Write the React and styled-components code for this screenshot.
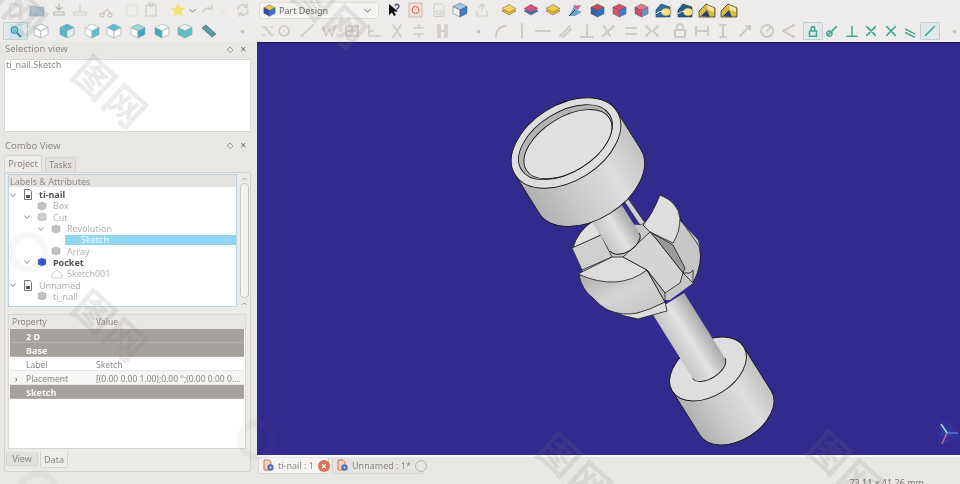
import React from "react";
import styled, { createGlobalStyle } from "styled-components";

const Global = createGlobalStyle`
  html, body { margin: 0; padding: 0; background: #e9e7e4; overflow: hidden; }
  * { box-sizing: border-box; }
`;

const Page = styled.div`
  position: relative;
  width: 960px;
  height: 484px;
  overflow: hidden;
  display: flex;
  flex-direction: column;
  background: #e9e7e4;
  color: #8a8884;
  font-family: "Noto Sans", sans-serif;
  font-size: 9px;
  filter: blur(0.35px);
`;
const Toolbars = styled.header`
  height: 42px;
  flex: none;
  display: flex;
  flex-direction: column;
  background: #eeecea;
`;
const ToolRow = styled.div`
  height: ${(p) => p.$h}px;
  display: flex;
  align-items: center;
`;
const Slot = styled.div`
  width: ${(p) => p.$w}px;
  flex: none;
  height: 18px;
  display: flex;
  align-items: center;
  justify-content: center;
  border-radius: 2px;
  background: ${(p) => (p.$on ? "#dfe9ea" : "transparent")};
  box-shadow: ${(p) => (p.$on ? "inset 0 0 0 1px #c6cfcf" : "none")};
  & > svg { flex: none; }
`;
const Combo = styled.div`
  width: 118px;
  height: 15px;
  flex: none;
  margin: 0 6px 0 0;
  display: flex;
  align-items: center;
  gap: 3px;
  padding: 0 6px 0 3px;
  background: #f4f3f1;
  border-radius: 2px;
  box-shadow: 0 0 0 1px #dfddd9;
  color: #6a6864;
  font-size: 9px;
`;
const ComboLabel = styled.span`
  flex: 1;
`;
const Main = styled.main`
  flex: 1;
  min-height: 0;
  display: flex;
`;
const Dock = styled.aside`
  width: 257px;
  flex: none;
  display: flex;
  flex-direction: column;
  padding: 0 6px 3px 4px;
`;
const DockTitle = styled.div`
  height: ${(p) => p.$h}px;
  flex: none;
  display: flex;
  align-items: center;
  justify-content: space-between;
  padding: ${(p) => p.$pt || 0}px 4px ${(p) => p.$pb || 0}px 1px;
  color: #8f8d89;
  font-size: 9.500px;
`;
const TitleBtns = styled.div`
  display: flex;
  gap: 7px;
  align-items: center;
  color: #77756f;
  font-size: 8px;
  line-height: 1;
`;
const SelectionBox = styled.div`
  height: 73px;
  flex: none;
  padding: 0 1px;
  background: #ffffff;
  border: 1px solid #dbd9d5;
  color: #8a8884;
  line-height: 10px;
  font-size: 9px;
`;
const TabsRow = styled.div`
  height: 17px;
  flex: none;
  display: flex;
  align-items: flex-end;
  gap: 3px;
`;
const TabBtn = styled.div`
  width: ${(p) => p.$w}px;
  height: ${(p) => (p.$on ? 17 : 15)}px;
  display: flex;
  align-items: center;
  justify-content: center;
  padding-bottom: 2px;
  background: ${(p) => (p.$on ? "#eeedea" : "#e3e1dd")};
  border: 1px solid #d6d4d0;
  border-bottom: none;
  border-radius: 2px 2px 0 0;
  color: #8a8884;
  font-size: 9px;
`;
const ComboPanel = styled.section`
  flex: 1;
  min-height: 0;
  display: flex;
  flex-direction: column;
  border: 1px solid #d6d4d0;
  border-radius: 2px;
  padding: 1px 3px 3px 3px;
  background: #eceae7;
`;
const TreeWrap = styled.div`
  height: 133px;
  flex: none;
  display: flex;
  gap: 2px;
`;
const Tree = styled.div`
  width: 229px;
  flex: none;
  background: #fff;
  border: 1px solid #b9d6e2;
`;
const TreeHead = styled.div`
  height: 12px;
  display: flex;
  align-items: center;
  padding-left: 1px;
  background: #e5e3e0;
  color: #8f8d89;
  font-size: 9px;
`;
const TreeBody = styled.div`
  padding-top: 2px;
`;
const TreeRow = styled.div`
  height: 11.300px;
  display: flex;
  align-items: center;
  padding-left: ${(p) => p.$depth * 14}px;
  color: ${(p) => (p.$bold ? "#55534f" : "#b4b2ae")};
  font-weight: ${(p) => (p.$bold ? 700 : 400)};
  font-size: 9px;
  white-space: nowrap;
`;
const Chev = styled.span`
  width: 14px;
  flex: none;
  display: flex;
`;
const TreeIcon = styled.span`
  width: 16px;
  flex: none;
  display: flex;
`;
const Selected = styled.span`
  flex: 1;
  margin-left: -16px;
  padding-left: 16px;
  height: 10px;
  display: flex;
  align-items: center;
  background: #90d5f3;
  color: #f4fbff;
`;
const Scroll = styled.div`
  width: 10px;
  flex: none;
  display: flex;
  flex-direction: column;
  align-items: center;
  color: #77756f;
  font-size: 7px;
  line-height: 8px;
`;
const ScrollThumb = styled.div`
  width: 9px;
  flex: 1;
  margin: 1px 0;
  background: #f2f1ef;
  border: 1px solid #c9c7c3;
  border-radius: 4px;
`;
const Props = styled.div`
  margin-top: 7px;
  width: 238px;
  flex: 1;
  min-height: 0;
  display: flex;
  flex-direction: column;
  padding: 0 1px;
  border: 1px solid #dad8d4;
  background: #fff;
`;
const PropHead = styled.div`
  height: 14px;
  flex: none;
  margin: 0 -1px;
  display: grid;
  grid-template-columns: 84px 1fr;
  align-items: center;
  padding: 0 0 2px 3px;
  background: #e9e7e4;
  color: #8a8884;
  font-size: 8.500px;
`;
const Group = styled.div`
  height: 14px;
  flex: none;
  padding-left: 16px;
  display: flex;
  align-items: center;
  background: #a5a29d;
  box-shadow: inset 0 -1px 0 #b5b2ad;
  color: #fbfaf8;
  font-weight: 700;
  font-size: 9px;
`;
const PropRow = styled.div`
  height: 14px;
  flex: none;
  padding-top: 2px;
  display: grid;
  grid-template-columns: 16px 70px 1fr;
  align-items: center;
  border-bottom: 1px solid #e8e6e3;
  background: ${(p) => (p.$alt ? "#f6f5f3" : "#fff")};
  color: #8a8884;
  font-size: 8.500px;
  white-space: nowrap;
`;
const Cell = styled.span`
  overflow: hidden;
  text-overflow: ellipsis;
  white-space: nowrap;
  padding-right: 3px;
`;
const Expander = styled.span`
  padding-left: 5px;
  color: #55534f;
  font-size: 8px;
`;
const BottomTabs = styled.div`
  height: 19px;
  flex: none;
  display: flex;
  align-items: flex-start;
  gap: 2px;
  margin-left: -2px;
  padding-top: 3px;
`;
const BottomTab = styled.div`
  width: ${(p) => p.$w}px;
  height: ${(p) => (p.$on ? 16 : 14)}px;
  display: flex;
  align-items: center;
  justify-content: center;
  background: ${(p) => (p.$on ? "#eeedea" : "#e3e1dd")};
  border: 1px solid #d6d4d0;
  border-top: none;
  border-radius: 0 0 2px 2px;
  font-size: 9px;
`;
const Center = styled.div`
  flex: 1;
  min-width: 0;
  display: flex;
  flex-direction: column;
`;
const Viewport = styled.div`
  height: 413px;
  flex: none;
  background: #332a8e;
  border-top: 1px solid #1d1a55;
`;
const Canvas = styled.svg`
  display: block;
  width: 703px;
  height: 412px;
`;
const DocTabs = styled.nav`
  height: 20px;
  flex: none;
  display: flex;
  align-items: center;
  gap: 3px;
  padding-left: 1px;
  border-top: 2px solid #f6f5f8;
`;
const DocTab = styled.div`
  width: ${(p) => p.$w}px;
  height: 16px;
  display: flex;
  align-items: center;
  gap: 4px;
  padding: 0 ${(p) => (p.$on ? 1 : 2)}px 0 4px;
  background: ${(p) => (p.$on ? "#f5f4f2" : "#e6e4e1")};
  border: 1px solid #d8d6d2;
  border-top: none;
  border-radius: 0 0 3px 3px;
  color: #8a8884;
  font-size: 9px;
`;
const DocName = styled.span`
  flex: 1;
  white-space: nowrap;
`;
const CloseDot = styled.span`
  width: 12px;
  height: 12px;
  flex: none;
  margin-right: ${(p) => (p.$on ? 0 : 5)}px;
  border-radius: 50%;
  display: flex;
  align-items: center;
  justify-content: center;
  font-size: 10px;
  font-weight: 700;
  line-height: 1;
  color: #fff;
  background: ${(p) => (p.$on ? "#d9735a" : "#e6e4e1")};
  border: ${(p) => (p.$on ? "none" : "1.500px solid #b5b3af")};
`;
const Status = styled.footer`
  height: 9px;
  flex: none;
  display: flex;
  justify-content: flex-end;
  padding-right: 36px;
  color: #77756f;
  font-size: 9px;
  line-height: 15px;
  overflow: hidden;
`;
const Stamp = styled.div`
  position: absolute;
  left: ${(p) => p.$x}px;
  top: ${(p) => p.$y}px;
  transform: rotate(42deg);
  color: rgba(120, 120, 120, 0.15);
  font-family: "Noto Sans CJK SC", sans-serif;
  font-size: 40px;
  font-weight: 700;
  line-height: 1;
  letter-spacing: 2px;
  white-space: nowrap;
  pointer-events: none;
`;
const Ring = styled.div`
  position: absolute;
  left: ${(p) => p.$x}px;
  top: ${(p) => p.$y}px;
  width: 40px;
  height: 40px;
  border-radius: 50%;
  border: 7px solid rgba(120, 120, 120, 0.06);
  pointer-events: none;
`;

/* ---------- drawn icons ---------- */
const Cube = ({ t = "#e84", l = "#c33", r = "#36b", s = 15 }) => (
  <svg width={s} height={s} viewBox="0 0 16 16">
    <path d="M8 1 15 4.500 8 8 1 4.500Z" fill={t} stroke="#444" strokeWidth=".4" />
    <path d="M1 4.500 8 8V15L1 11.500Z" fill={l} stroke="#444" strokeWidth=".4" />
    <path d="M15 4.500 8 8V15L15 11.500Z" fill={r} stroke="#444" strokeWidth=".4" />
  </svg>
);
const WireCube = ({ t = "#fff", l = "#fff", r = "#fff" }) => (
  <svg width="16" height="16" viewBox="0 0 16 16">
    <path d="M8 1 15 4.500 8 8 1 4.500Z" fill={t} stroke="#9aa" strokeWidth=".7" />
    <path d="M1 4.500 8 8V15L1 11.500Z" fill={l} stroke="#9aa" strokeWidth=".7" />
    <path d="M15 4.500 8 8V15L15 11.500Z" fill={r} stroke="#9aa" strokeWidth=".7" />
  </svg>
);
const Stroke = ({ d, c = "#cfcdc9", w = 1.600, s = 16 }) => (
  <svg width={s} height={s} viewBox="0 0 16 16">
    <path d={d} fill="none" stroke={c} strokeWidth={w} strokeLinecap="round" strokeLinejoin="round" />
  </svg>
);
const Layers = ({ c, e = "#6a5" }) => (
  <svg width="16" height="16" viewBox="0 0 16 16">
    <path d="M1 9 8 5l7 4-7 4Z" fill={e} stroke="#654" strokeWidth=".5" />
    <path d="M1 6.500 8 2.500l7 4-7 4Z" fill={c} stroke="#654" strokeWidth=".5" />
  </svg>
);
const Scene = ({ c }) => (
  <svg width="18" height="17" viewBox="0 0 18 17">
    <path d="M2 15V8l5-6 9 3v10Z" fill={c} stroke="#234" strokeWidth=".6" />
    <ellipse cx="12" cy="10" rx="5" ry="4" fill="#f4e27a" stroke="#555" strokeWidth=".5" />
    <path d="M2 12c3-3 6-3 9-2" stroke="#fff" fill="none" />
  </svg>
);
const Scene2 = () => (
  <svg width="18" height="17" viewBox="0 0 18 17">
    <path d="M1 15V9l7-7 9 4v9Z" fill="#d9b93c" stroke="#222" strokeWidth=".7" />
    <path d="M3 14 9 8l3 7Z" fill="#24466f" />
    <path d="M9 3l7 3v4l-6-2Z" fill="#f0e7b0" />
  </svg>
);
const Doc = ({ c = "#ddd" }) => <Stroke c={c} w={1.100} d="M3 14V2h7l3 3v9Z M10 2v3h3" />;
function Bullet() {
  return <svg width="5" height="5" viewBox="0 0 5 5"><circle cx="2.500" cy="2.500" r="1.800" fill="#c5c3bf" /></svg>;
}

const grey = "#d2d0cc";
const Row1 = [
  [22, <Doc c="#d5d3cf" />],
  [22, <svg width="16" height="14" viewBox="0 0 16 14"><path d="M1 3h5l1 1h8v9H1Z" fill="#aebfce" stroke="#9aa9b8" strokeWidth=".5" /></svg>],
  [21, <Stroke c="#b9b7b3" w={1.200} d="M3 13h10V10H3Z M8 2v6M5 5l3 3 3-3" />],
  [22, <Stroke c={grey} w={1.200} d="M2 13h12V10H2Z M8 3v6" />],
  [32, <Stroke c="#c4c2be" w={1.100} d="M3 11a2 2 0 1 0 .1 0M11 11a2 2 0 1 0 .1 0M5 11l3-4 3 4" />],
  [18, <Stroke c="#e2e0dc" w={1.100} d="M3 3h10v11H3Z" />],
  [20, <Stroke c="#cdcbc7" w={1.100} d="M3 3h10v11H3ZM6 1h4v3H6Z" />],
  [8, null],
  [18, <svg width="14" height="14" viewBox="0 0 14 14"><path d="M7 0l2 4.500 5 .5-3.500 3.500 1 5L7 11l-4.500 2.500 1-5L0 5l5-.5Z" fill="#f3e36a" /></svg>],
  [10, <Stroke c="#444" w={1.100} s={9} d="M3 6l5 5 5-5" />],
  [22, <Stroke c={grey} w={1.500} d="M3 10c2-4 5-5 9-3M12 3v4H8" />],
  [8, <Stroke c={grey} w={1.200} s={9} d="M3 6l5 5 5-5" />],
  [32, <Stroke c={grey} w={1.700} d="M3 8a5 5 0 0 1 9-3M13 8a5 5 0 0 1-9 3M12 2v3H9M4 14v-3h3" />],
  [1, null],
];
const Row1b = [
  [19, <svg width="14" height="14" viewBox="0 0 14 14"><path d="M2 1v11l3-2.500L7 13l2-1-2-3.500h4Z" fill="#111" /><path d="M8 3a2 2 0 1 1 3 2l-1 1v1" fill="none" stroke="#447" strokeWidth="1.300" /></svg>],
  [25, <svg width="15" height="16" viewBox="0 0 15 16"><rect x="1" y="1" width="13" height="14" fill="#f3ddd5" stroke="#c7b7af" /><circle cx="7.500" cy="8" r="3.500" fill="none" stroke="#c66" /></svg>],
  [21, <Stroke c="#cfcdc9" w={1} d="M3 14V2h8l2 2v10ZM6 9h5v3H6Z" />],
  [22, <Cube t="#9ec7ea" l="#f2f0ec" r="#3f7fc4" s={16} />],
  [22, <Stroke c={grey} w={1.200} d="M3 9v5h10V9M8 2v7M5 5l3-3 3 3" />],
  [5, null],
];
const Row1c = [
  [22, <Layers c="#f1d75a" e="#e0b63a" />],
  [22, <Layers c="#d94f84" e="#2d77b8" />],
  [22, <Layers c="#f1c94a" e="#e8b83a" />],
  [22, <svg width="16" height="16" viewBox="0 0 16 16"><path d="M2 14 8 2l2 6 5 2-7 4Z" fill="#6fa4d6" /><path d="M6 4l8-1-3 5Z" fill="#d65a8e" /><path d="M2 14 8 8" stroke="#444" /></svg>],
  [22, <Cube t="#c84a5c" l="#3a5fa8" r="#2c76c4" s={15} />],
  [22, <Cube t="#d9506a" l="#d9506a" r="#3384cd" s={15} />],
  [22, <Cube t="#e27a8e" l="#cc4e6c" r="#7a8fc0" s={15} />],
  [22, <Scene c="#2f6fa8" />],
  [22, <Scene c="#235b8e" />],
  [22, <Scene2 />],
  [22, <Scene2 />],
];
const view = "#56c0cf";
const Row2 = [
  [25, <svg width="14" height="15" viewBox="0 0 14 15"><rect width="14" height="15" fill="#cfe3e8" /><circle cx="5.500" cy="6" r="3.500" fill="#7cc0d4" stroke="#3a8ca4" /><path d="M8 9l4 4" stroke="#3a8ca4" strokeWidth="2" /></svg>, true],
  [26, <WireCube />],
  [26, <WireCube t="#4fb7c6" l="#4fb7c6" r="#e2f2f4" />],
  [23, <WireCube r={view} />],
  [22, <WireCube t={view} />],
  [26, <WireCube r="#39a9bb" t="#9ad9e2" />],
  [22, <WireCube l="#39a9bb" />],
  [23, <WireCube t="#e8f5f6" l={view} r={view} />],
  [26, <svg width="16" height="16" viewBox="0 0 16 16"><path d="M1 5l4-3 10 9-4 3Z" fill="#5f97a5" stroke="#37626e" strokeWidth=".6" /></svg>],
  [40, <Bullet />],
];
const g2 = "#cdcbc7";
const sketchPaths = [
  ["M3 4h2M11 4h2M3 12h2M11 12h2M5 4l6 8", 11],
  ["M8 3a5 5 0 1 0 .1 0M8 8h.1", 22.500],
  ["M2 13l6-5 6-6M4 13h.1", 22.500],
  ["M2 3l3 10 3-7 3 7 3-10", 22.500],
  ["M2 3h12v10H2ZM2 8h12M8 3v10", 22.500],
  ["M3 2v11h11M3 8h4", 22.500],
  ["M4 2l8 12M12 2 4 14", 22.500],
  ["M3 5h10M3 11h10M8 2v3M8 11v3", 22.500],
  ["M4 2h2v12H4ZM11 2h2v12h-2ZM6 8h5", 22.500],
];
const sketchPaths2 = [
  "M4 14C4 7 8 3 14 3",
  "M8 1v14",
  "M1 8h14",
  "M3 13 13 3M6 14 14 6",
  "M2 14h12M8 2v12",
  "M2 13 13 3M3 3l6 10",
  "M3 5h10M3 11h10",
  "M2 3l5 5-5 5M14 3 9 8l5 5",
];
const sketchPaths3 = [
  "M3 7h10v7H3ZM5 7V4a3 3 0 0 1 6 0v3",
  "M2 4v8M14 4v8M2 8h12",
  "M8 2v12M5 2h6M5 14h6",
  "M3 13 13 3M9 3h4v4",
  "M8 2a6 6 0 1 0 .1 0M8 8l3-3",
  "M14 2 3 8l11 6",
];
const teal = [
  "M4 8h8v6H4ZM6 8V5a2 2 0 0 1 4 0v3",
  "M3 13 13 3M5 8a3 3 0 1 0 .1 0",
  "M2 14h12M8 3v11",
  "M3 3l10 10M13 3 3 13M5 5h1M11 5h1M5 11h1M11 11h1",
  "M3 3l10 10M13 3 3 13",
  "M3 6l10 5M3 10l10 5",
  "M3 13 13 3M3 13h.1M13 3h.1",
];

const Chevron = () => (
  <svg width="8" height="8" viewBox="0 0 8 8">
    <path d="M1.500 2.500 4 5.500 6.500 2.500" fill="none" stroke="#8a8884" strokeWidth="1" />
  </svg>
);
const MiniCube = ({ c = "#c3c1bd" }) => (
  <svg width="10" height="10" viewBox="0 0 10 10">
    <path d="M1 2.500 5 1l4 1.500v5L5 9 1 7.500Z" fill={c} stroke="#9f9d99" strokeWidth=".4" />
  </svg>
);
const MiniDoc = () => (
  <svg width="10" height="11" viewBox="0 0 10 11">
    <path d="M1.500.5h5l2 2v8h-7Z" fill="#fff" stroke="#55534f" strokeWidth=".8" />
    <rect x="3" y="6" width="4" height="3" fill="#55534f" />
  </svg>
);
const MiniSketch = () => (
  <svg width="12" height="10" viewBox="0 0 12 10">
    <path d="M1 9V5l5-4 5 4v4Z" fill="none" stroke="#c9c7c3" strokeWidth=".9" />
  </svg>
);

const tree = [
  { d: 0, label: "ti-nail", chev: true, icon: <MiniDoc />, bold: true },
  { d: 1, label: "Box", icon: <MiniCube /> },
  { d: 1, label: "Cut", chev: true, icon: <MiniCube c="#d0cecb" /> },
  { d: 2, label: "Revolution", chev: true, icon: <MiniCube /> },
  { d: 3, label: "Sketch", selected: true },
  { d: 2, label: "Array", icon: <MiniCube /> },
  { d: 1, label: "Pocket", chev: true, icon: <MiniCube c="#2f55d0" />, bold: true },
  { d: 2, label: "Sketch001", icon: <MiniSketch /> },
  { d: 0, label: "Unnamed", chev: true, icon: <MiniDoc /> },
  { d: 1, label: "ti_nall", icon: <MiniCube /> },
];

const Cylinder = ({ x, y, rx, ry, len, angle = -32, fill = "url(#cyl)", top = "#dedede", bare, children }) => (
  <g transform={`translate(${x} ${y}) rotate(${angle})`}>
    <path
      d={`M${-rx} 0V${len}A${rx} ${ry} 0 0 0 ${rx} ${len}V0Z`}
      fill={fill}
      stroke={bare ? "none" : "#1a1a2a"}
      strokeWidth=".9"
    />
    {bare ? (
      <path d={`M${-rx} ${len}A${rx} ${ry} 0 0 0 ${rx} ${len}`} fill="none" stroke="#1a1a1a" strokeWidth=".9" />
    ) : (
      <ellipse rx={rx} ry={ry} fill={top} stroke="#1a1a1a" strokeWidth=".9" />
    )}
    {children}
  </g>
);

const Model = () => (
  <Canvas viewBox="257 43 703 412">
    <defs>
      <linearGradient id="cyl" x1="0" x2="1" y1="0" y2="0">
        <stop offset="0" stopColor="#b0b0b0" />
        <stop offset=".35" stopColor="#cbcbcb" />
        <stop offset=".7" stopColor="#dedede" />
        <stop offset="1" stopColor="#c2c2c2" />
      </linearGradient>
      <linearGradient id="shaft" x1="0" x2="1" y1="0" y2="0">
        <stop offset="0" stopColor="#c6c6c6" />
        <stop offset=".5" stopColor="#e2e2e2" />
        <stop offset="1" stopColor="#a9a9a9" />
      </linearGradient>
      <linearGradient id="side" x1="0" x2="1" y1="0" y2="1">
        <stop offset="0" stopColor="#a9a9a9" />
        <stop offset=".5" stopColor="#d4d4d4" />
        <stop offset="1" stopColor="#c4c4c4" />
      </linearGradient>
      <radialGradient id="axisGlow">
        <stop offset="0" stopColor="#3450c0" stopOpacity=".7" />
        <stop offset="1" stopColor="#332a8e" stopOpacity="0" />
      </radialGradient>
    </defs>

    {/* lower cap */}
    <Cylinder x={708} y={369} rx={42} ry={27} len={52} />
    {/* lower shaft */}
    <Cylinder x={668} y={303} rx={19} ry={10} len={77} fill="url(#shaft)" bare />

    {/* solid core that closes the gaps between the blades */}
    <path d="M593 222 640 225 670 210 698 240Q704 262 693 283L670 300 600 300 582 270 572 248Z" fill="#c6c6c6" />

    <g stroke="#1a1a1a" strokeWidth=".8" strokeLinejoin="round">
      <path d="M680 218 Q686 228 699 246 Q704 262 693 283" fill="none" />
      <path d="M660 195Q678 202 680 218 680 232 673 243L650 232 643 225Q652 215 660 195Z" fill="#dedede" />
      {/* dark slot wall */}
      <path d="M650 232 673 245 685 268 683 273 657 240Z" fill="#9a9a9a" />
      <path d="M683 273 690 273 693 270 693 283Z" fill="#c9c9c9" />
      {/* left blade */}
      <path d="M573 248Q577 232 593 221L601 235Z" fill="#e0e0e0" />
      <path d="M572 248 601 235 612 257 582 270Z" fill="#cfcfcf" />
      {/* lower segment: thin ledge, side, top */}
      <path d="M608 310 637 313 665 302 667 311 638 319 625 316Z" fill="#dcdcdc" />
      <path d="M579 275Q582 290 593 298 600 306 608 310 622 316 637 313 650 310 665 302L647 270Z" fill="url(#side)" />
      <path d="M578 274 612 257 623 257 647 270Q618 292 578 274Z" fill="#dddddd" />
      {/* centre block */}
      <path d="M650 232 623 257 647 270 665 293 680 283 683 273 657 240Z" fill="#d4d4d4" />
      <path d="M665 293 665 302 647 270Z" fill="#bdbdbd" />
    </g>

    {/* upper shaft and the sliver behind it */}
    <path d="M622 198 627 197 645 223 640 225Z" fill="#cfcfcf" stroke="#1a1a1a" strokeWidth=".6" />
    <Cylinder x={593} y={191} rx={17} ry={10} len={60} fill="url(#shaft)" bare />

    {/* upper cap */}
    <Cylinder x={566} y={143} rx={60} ry={38} len={45}>
      <ellipse rx={52} ry={30} cy={-1} fill="#b4b4b4" stroke="#1a1a1a" strokeWidth=".9" />
      <ellipse rx={49} ry={27} cx={1} cy={2} fill="#e0e0e0" stroke="#1a1a1a" strokeWidth=".9" />
    </Cylinder>

    {/* axis cross */}
    <circle cx="947" cy="433" r="15" fill="url(#axisGlow)" />
    <path d="M947 433H958" stroke="#4f7ad8" strokeWidth="1.500" />
    <path d="M947 433 941 424" stroke="#9fd8d8" strokeWidth="1.500" />
    <path d="M947 433 942 444" stroke="#c36a9a" strokeWidth="1.500" />
  </Canvas>
);

const SmallDocIcon = () => (
  <svg width="11" height="13" viewBox="0 0 11 13" style={{ flex: "none" }}>
    <path d="M1 1h5l2 2v8H1Z" fill="#f1d3c6" stroke="#d9734f" strokeWidth="1" />
    <circle cx="7.500" cy="8.500" r="3.200" fill="#5271b0" />
    <circle cx="7.500" cy="8.500" r="1" fill="#dfe5f2" />
  </svg>
);

export default function App() {
  return (
    <Page>
      <Global />
      <Toolbars>
        <ToolRow $h={20}>
          <Slot $w={4} />
          {Row1.map(([w, ic], i) => (
            <Slot key={i} $w={w}>{ic}</Slot>
          ))}
          <Combo>
            <Cube t="#e8c83a" l="#2c4ea8" r="#3a76c8" s={13} />
            <ComboLabel>Part Design</ComboLabel>
            <Stroke c="#444" w={1.300} s={9} d="M3 6l5 5 5-5" />
          </Combo>
          {Row1b.map(([w, ic], i) => (
            <Slot key={i} $w={w}>{ic}</Slot>
          ))}
          {Row1c.map(([w, ic], i) => (
            <Slot key={i} $w={w}>{ic}</Slot>
          ))}
        </ToolRow>
        <ToolRow $h={22}>
          <Slot $w={3} />
          {Row2.map(([w, ic, on], i) => (
            <Slot key={i} $w={w} $on={on}>{ic}</Slot>
          ))}
          {sketchPaths.map(([d, w], i) => (
            <Slot key={i} $w={w}><Stroke c={g2} d={d} /></Slot>
          ))}
          <Slot $w={20} />
          <Slot $w={10}><Bullet /></Slot>
          <Slot $w={6} />
          {sketchPaths2.map((d, i) => (
            <Slot key={i} $w={21.800}><Stroke c={g2} w={2} d={d} /></Slot>
          ))}
          <Slot $w={5.600} />
          {sketchPaths3.map((d, i) => (
            <Slot key={i} $w={21.700}><Stroke c={g2} w={2} d={d} /></Slot>
          ))}
          <Slot $w={4} />
          {teal.map((d, i) => (
            <Slot key={i} $w={19.500} $on={i === 0 || i === 6}><Stroke c="#4aa596" w={1.800} s={14} d={d} /></Slot>
          ))}
          <Slot $w={12} />
          <Slot $w={6}><Bullet /></Slot>
        </ToolRow>
      </Toolbars>
      <Main>
        <Dock>
          <DockTitle $h={17} $pb={4}>
            Selection view
            <TitleBtns><span>◇</span><span>✕</span></TitleBtns>
          </DockTitle>
          <SelectionBox>ti_nail.Sketch</SelectionBox>
          <DockTitle $h={23} $pt={3}>
            Combo View
            <TitleBtns><span>◇</span><span>✕</span></TitleBtns>
          </DockTitle>
          <TabsRow>
            <TabBtn $w={38} $on>Project</TabBtn>
            <TabBtn $w={31}>Tasks</TabBtn>
          </TabsRow>
          <ComboPanel>
            <TreeWrap>
              <Tree>
                <TreeHead>Labels &amp; Attributes</TreeHead>
                <TreeBody>
                  {tree.map((n) => (
                    <TreeRow key={n.label} $depth={n.d} $bold={n.bold}>
                      <Chev>{n.chev && <Chevron />}</Chev>
                      <TreeIcon>{n.icon}</TreeIcon>
                      {n.selected ? <Selected>{n.label}</Selected> : n.label}
                    </TreeRow>
                  ))}
                </TreeBody>
              </Tree>
              <Scroll>
                <span>︿</span>
                <ScrollThumb />
                <span>︿</span>
              </Scroll>
            </TreeWrap>
            <Props>
              <PropHead><span>Property</span><span>Value</span></PropHead>
              <Group>2 D</Group>
              <Group>Base</Group>
              <PropRow><span /><span>Label</span><Cell>Sketch</Cell></PropRow>
              <PropRow $alt>
                <Expander>›</Expander>
                <span>Placement</span>
                <Cell>[(0.00 0.00 1.00);0.00 °;(0.00 0.00 0.00)]</Cell>
              </PropRow>
              <Group>Sketch</Group>
            </Props>
            <BottomTabs>
              <BottomTab $w={32}>View</BottomTab>
              <BottomTab $w={28} $on>Data</BottomTab>
            </BottomTabs>
          </ComboPanel>
        </Dock>
        <Center>
          <Viewport><Model /></Viewport>
          <DocTabs>
            <DocTab $w={71} $on><SmallDocIcon /><DocName>ti-nail : 1</DocName><CloseDot $on>×</CloseDot></DocTab>
            <DocTab $w={91}><SmallDocIcon /><DocName>Unnamed : 1*</DocName><CloseDot /></DocTab>
          </DocTabs>
        </Center>
      </Main>
      <Status>73.11 x 41.26 mm</Status>
      <Stamp $x={70} $y={71}>图网</Stamp>
      <Stamp $x={70} $y={305}>图网</Stamp>
      <Stamp $x={535} $y={448}>图网</Stamp>
      <Stamp $x={805} $y={446}>图网</Stamp>
      <Stamp $x={290} $y={-8}>图网</Stamp>
      <Stamp $x={-30} $y={-20}>图网</Stamp>
      <Ring $x={8} $y={232} />
      <Ring $x={237} $y={420} />
      <Ring $x={18} $y={470} />
    </Page>
  );
}
